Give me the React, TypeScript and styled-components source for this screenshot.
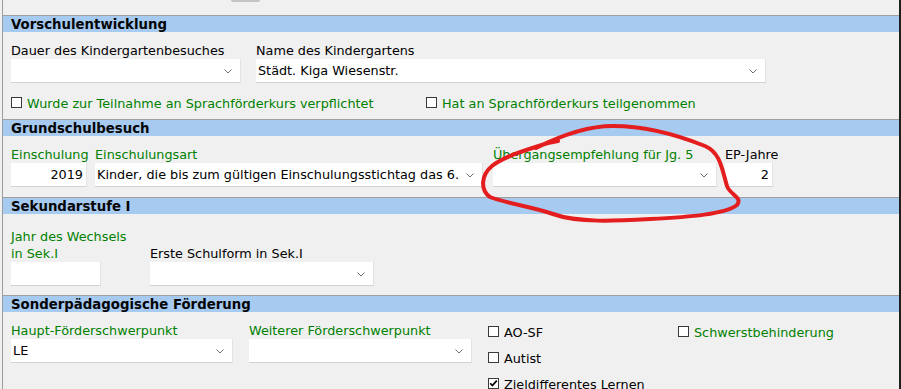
import React from "react";
import styled, { createGlobalStyle } from "styled-components";

const GlobalStyle = createGlobalStyle`
  html, body { margin: 0; padding: 0; background: #f0f0f0; }
  body {
    font-family: "DejaVu Sans", Verdana, sans-serif;
    font-size: 12.8px;
    color: #000;
  }
`;

const Page = styled.div`
  position: relative;
  width: 901px;
  height: 389px;
  overflow: hidden;
  background: #f0f0f0;
`;

const Frame = styled.div`
  box-sizing: border-box;
  margin-left: 2px;
  width: 899px;
  height: 389px;
  border-left: 1px solid #9c9c9c;
  border-right: 2px solid #1f1f1f;
  display: flex;
  flex-direction: column;
`;

const TopStrip = styled.div`
  height: 15px;
  flex: none;
  display: flex;
`;

const TinyTab = styled.div`
  margin-left: 228px;
  width: 29px;
  height: 2px;
  background: #c3c3c3;
  border-radius: 0 0 2px 2px;
`;

const SectionHeader = styled.div`
  flex: none;
  height: 16px;
  border-top: 1px solid #a0a0a0;
  background: #a6caf0;
  padding-left: 8px;
  font-weight: bold;
  font-size: 13.3px;
  line-height: 18px;
  white-space: nowrap;
  color: #050505;
`;

const SectionBody = styled.div<{ $h?: number; $pt: number }>`
  flex: none;
  box-sizing: border-box;
  height: ${(p) => (p.$h ? `${p.$h}px` : "auto")};
  padding: ${(p) => p.$pt}px 8px 0 8px;
  display: flex;
  flex-direction: column;
`;

const Row = styled.div<{ $gap?: number; $mt?: number; $end?: boolean }>`
  display: flex;
  align-items: ${(p) => (p.$end ? "flex-end" : "flex-start")};
  gap: ${(p) => p.$gap ?? 0}px;
  margin-top: ${(p) => p.$mt ?? 0}px;
`;

const Field = styled.div<{ $w: number; $ml?: number }>`
  width: ${(p) => p.$w}px;
  margin-left: ${(p) => p.$ml ?? 0}px;
  flex: none;
  display: flex;
  flex-direction: column;
`;

const Label = styled.div<{ $green?: boolean }>`
  line-height: 17px;
  white-space: nowrap;
  color: ${(p) => (p.$green ? "#008000" : "#000")};
`;

const InputBox = styled.div<{ $right?: boolean }>`
  box-sizing: border-box;
  height: 24px;
  background: #fff;
  border-bottom: 1px solid #d2d2d2;
  border-right: 1px solid #e2e2e2;
  display: flex;
  align-items: center;
  justify-content: ${(p) => (p.$right ? "flex-end" : "flex-start")};
  padding: 0 ${(p) => (p.$right ? 3 : 2)}px 0 2px;
  white-space: nowrap;
  overflow: hidden;
`;

const ComboText = styled.span`
  flex: 1;
  min-width: 0;
  overflow: hidden;
  white-space: nowrap;
`;

const ChevronIcon = styled.svg`
  flex: none;
  width: 8px;
  height: 5px;
  margin: 1px 6px 0 6px;
`;

const Chevron = () => (
  <ChevronIcon viewBox="0 0 8 5">
    <polyline points="0.5,0.5 4,4 7.5,0.5" fill="none" stroke="#707070" strokeWidth="1" />
  </ChevronIcon>
);

const Combo = ({ value }: { value?: string }) => (
  <InputBox>
    <ComboText>{value}</ComboText>
    <Chevron />
  </InputBox>
);

const CheckItem = styled.div<{ $w?: number }>`
  display: flex;
  align-items: flex-start;
  width: ${(p) => (p.$w ? `${p.$w}px` : "auto")};
  flex: none;
  line-height: 17px;
  white-space: nowrap;
`;

const Box = styled.div`
  box-sizing: border-box;
  width: 11px;
  height: 11px;
  margin-top: 2px;
  margin-right: 5px;
  border: 1px solid #3a3a3a;
  background: #fff;
  display: flex;
  align-items: center;
  justify-content: center;
`;

const CheckText = styled.span<{ $green?: boolean }>`
  color: ${(p) => (p.$green ? "#008000" : "#000")};
`;

const Check = ({
  text,
  green,
  checked,
  w,
}: {
  text: string;
  green?: boolean;
  checked?: boolean;
  w?: number;
}) => (
  <CheckItem $w={w}>
    <Box>
      {checked && (
        <svg width="9" height="9" viewBox="0 0 9 9">
          <polyline points="1.2,4.2 3.4,6.6 7.8,1.6" fill="none" stroke="#000" strokeWidth="1.7" />
        </svg>
      )}
    </Box>
    <CheckText $green={green}>{text}</CheckText>
  </CheckItem>
);

const CheckColumn = styled.div<{ $w: number }>`
  width: ${(p) => p.$w}px;
  flex: none;
  display: flex;
  flex-direction: column;
  gap: 9px;
  margin-top: 2px;
`;

const Annotation = styled.svg`
  position: absolute;
  left: 0;
  top: 0;
  width: 901px;
  height: 389px;
  pointer-events: none;
`;

export default function App() {
  return (
    <Page>
      <GlobalStyle />
      <Frame>
        <TopStrip>
          <TinyTab />
        </TopStrip>

        <SectionHeader>Vorschulentwicklung</SectionHeader>
        <SectionBody $h={87} $pt={10}>
          <Row $gap={15}>
            <Field $w={230}>
              <Label>Dauer des Kindergartenbesuches</Label>
              <Combo />
            </Field>
            <Field $w={510}>
              <Label>Name des Kindergartens</Label>
              <Combo value="Städt. Kiga Wiesenstr." />
            </Field>
          </Row>
          <Row $mt={12}>
            <Check w={415} green text="Wurde zur Teilnahme an Sprachförderkurs verpflichtet" />
            <Check green text="Hat an Sprachförderkurs teilgenommen" />
          </Row>
        </SectionBody>

        <SectionHeader>Grundschulbesuch</SectionHeader>
        <SectionBody $h={61} $pt={10}>
          <Row>
            <Field $w={76}>
              <Label $green>Einschulung</Label>
              <InputBox $right>2019</InputBox>
            </Field>
            <Field $w={388} $ml={8}>
              <Label $green>Einschulungsart</Label>
              <Combo value="Kinder, die bis zum gültigen Einschulungsstichtag das 6." />
            </Field>
            <Field $w={224} $ml={10}>
              <Label $green>Übergangsempfehlung für Jg. 5</Label>
              <Combo />
            </Field>
            <Field $w={48} $ml={8}>
              <Label>EP-Jahre</Label>
              <InputBox $right>2</InputBox>
            </Field>
          </Row>
        </SectionBody>

        <SectionHeader>Sekundarstufe I</SectionHeader>
        <SectionBody $h={81} $pt={14}>
          <Row $gap={49} $end>
            <Field $w={90}>
              <Label $green>Jahr des Wechsels</Label>
              <Label $green>in Sek.I</Label>
              <InputBox />
            </Field>
            <Field $w={224}>
              <Label>Erste Schulform in Sek.I</Label>
              <Combo />
            </Field>
          </Row>
        </SectionBody>

        <SectionHeader>Sonderpädagogische Förderung</SectionHeader>
        <SectionBody $pt={10}>
          <Row $gap={16}>
            <Field $w={222}>
              <Label $green>Haupt-Förderschwerpunkt</Label>
              <Combo value="LE" />
            </Field>
            <Field $w={223}>
              <Label $green>Weiterer Förderschwerpunkt</Label>
              <Combo />
            </Field>
            <Row>
              <CheckColumn $w={190}>
                <Check text="AO-SF" />
                <Check text="Autist" />
                <Check checked text="Zieldifferentes Lernen" />
              </CheckColumn>
              <CheckColumn $w={200}>
                <Check green text="Schwerstbehinderung" />
              </CheckColumn>
            </Row>
          </Row>
        </SectionBody>
      </Frame>

      <Annotation viewBox="0 0 901 389">
        <path
          d="M 536 148
             C 560 136, 588 126, 613 126
             C 645 126, 680 136, 705 146
             C 721 153, 722 170, 727 186
             C 730 195, 743 197, 737 205
             C 726 214, 690 217, 650 219
             C 615 221, 578 223, 553 214
             C 533 207, 505 203, 490 197
             C 480 190, 481 175, 492 166
             C 505 156, 526 150, 548 143
             L 558 141"
          fill="none"
          stroke="#e41d1f"
          strokeWidth="4"
          strokeLinecap="round"
          strokeLinejoin="round"
        />
      </Annotation>
    </Page>
  );
}
